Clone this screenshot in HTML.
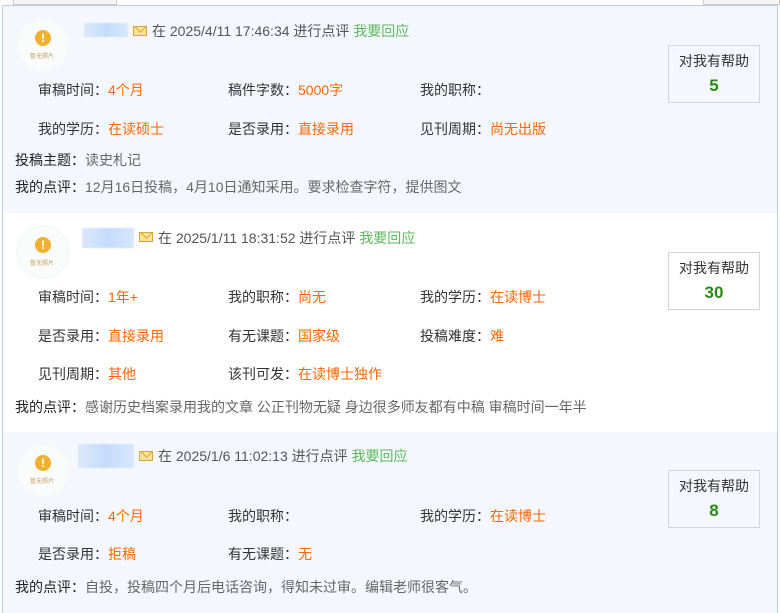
<!DOCTYPE html>
<html><head><meta charset="utf-8"><style>
*{margin:0;padding:0;box-sizing:border-box}
html,body{width:780px;height:613px;overflow:hidden}
body{background:#fff;font-family:"Liberation Sans","Noto Sans CJK SC",sans-serif;font-size:14px;color:#333;position:relative}
.a{position:absolute;white-space:nowrap;line-height:18px}
.tab{position:absolute;top:0;height:5px;background:#f5f5f5;border:1px solid #ccc;border-top:none}
.frame{position:absolute;left:2px;top:5px;width:776px;height:608px;border:1px solid #b5d0dc;border-bottom:none}
.row{position:absolute;left:3px;width:774px}
.av{position:absolute;left:16px;width:54px;height:54px;border-radius:50%;background:radial-gradient(circle,#fafcfc 60%,#e6ebee 100%)}
.av i{position:absolute;left:19px;top:12px;width:16px;height:16px;border-radius:50%;background:#f0b030;color:#fff;font-style:normal;font-size:12px;font-weight:bold;text-align:center;line-height:16px}
.av b{position:absolute;left:14px;top:33px;font-size:6px;color:#c9a060;font-weight:normal}
.blur{position:absolute;height:14px;background:linear-gradient(90deg,#dbe8fb,#c4dcfb,#d8e7fb);filter:blur(.6px)}
.mail{position:absolute;width:14px;height:10px;border:1px solid #d9a23a;background:#fbe39a;overflow:hidden}
.mail:after{content:"";position:absolute;left:2px;top:-5px;width:8px;height:8px;border-right:1px solid #d9a23a;border-bottom:1px solid #d9a23a;transform:rotate(45deg)}
.hd{color:#555}
.g{color:#5cb85c}
.o{color:#f60}
.lb{color:#222}
.c{color:#666}
.help{position:absolute;left:668px;width:92px;height:58px;border:1px solid #d5d5d5;text-align:center}
.help div{margin-top:5px;color:#333}
.help b{display:block;margin-top:5px;color:#2a8a14;font-size:17px}
</style></head><body>
<div class="tab" style="left:13px;width:104px"></div>
<div class="tab" style="left:703px;width:77px"></div>
<div class="frame"></div>
<div class="row" style="top:6px;height:207px;background:#f4f8fe"></div>
<div class="row" style="top:432px;height:181px;background:#f4f8fe"></div>

<!-- Row 1 -->
<div class="av" style="top:18px"><i>!</i><b>暂无照片</b></div>
<div class="blur" style="left:84px;top:23px;width:44px"></div>
<div class="mail" style="left:133px;top:26px"></div>
<div class="a hd" style="left:152px;top:22px">在 2025/4/11 17:46:34 进行点评 <span class="g">我要回应</span></div>
<div class="a" style="left:38px;top:81px">审稿时间：<span class="o">4个月</span></div>
<div class="a" style="left:228px;top:81px">稿件字数：<span class="o">5000字</span></div>
<div class="a" style="left:420px;top:81px">我的职称：</div>
<div class="a" style="left:38px;top:120px">我的学历：<span class="o">在读硕士</span></div>
<div class="a" style="left:228px;top:120px">是否录用：<span class="o">直接录用</span></div>
<div class="a" style="left:420px;top:120px">见刊周期：<span class="o">尚无出版</span></div>
<div class="a" style="left:15px;top:151px"><span class="lb">投稿主题：</span><span class="c">读史札记</span></div>
<div class="a" style="left:15px;top:178px"><span class="lb">我的点评：</span><span class="c">12月16日投稿，4月10日通知采用。要求检查字符，提供图文</span></div>
<div class="help" style="top:45px"><div>对我有帮助</div><b>5</b></div>

<!-- Row 2 -->
<div class="av" style="top:225px"><i>!</i><b>暂无照片</b></div>
<div class="blur" style="left:82px;top:228px;width:52px;height:20px"></div>
<div class="mail" style="left:139px;top:232px"></div>
<div class="a hd" style="left:158px;top:229px">在 2025/1/11 18:31:52 进行点评 <span class="g">我要回应</span></div>
<div class="a" style="left:38px;top:288px">审稿时间：<span class="o">1年+</span></div>
<div class="a" style="left:228px;top:288px">我的职称：<span class="o">尚无</span></div>
<div class="a" style="left:420px;top:288px">我的学历：<span class="o">在读博士</span></div>
<div class="a" style="left:38px;top:327px">是否录用：<span class="o">直接录用</span></div>
<div class="a" style="left:228px;top:327px">有无课题：<span class="o">国家级</span></div>
<div class="a" style="left:420px;top:327px">投稿难度：<span class="o">难</span></div>
<div class="a" style="left:38px;top:365px">见刊周期：<span class="o">其他</span></div>
<div class="a" style="left:228px;top:365px">该刊可发：<span class="o">在读博士独作</span></div>
<div class="a" style="left:15px;top:398px"><span class="lb">我的点评：</span><span class="c">感谢历史档案录用我的文章 公正刊物无疑 身边很多师友都有中稿 审稿时间一年半</span></div>
<div class="help" style="top:252px"><div>对我有帮助</div><b>30</b></div>

<!-- Row 3 -->
<div class="av" style="top:443px"><i>!</i><b>暂无照片</b></div>
<div class="blur" style="left:78px;top:444px;width:56px;height:24px"></div>
<div class="mail" style="left:139px;top:451px"></div>
<div class="a hd" style="left:158px;top:447px">在 2025/1/6 11:02:13 进行点评 <span class="g">我要回应</span></div>
<div class="a" style="left:38px;top:507px">审稿时间：<span class="o">4个月</span></div>
<div class="a" style="left:228px;top:507px">我的职称：</div>
<div class="a" style="left:420px;top:507px">我的学历：<span class="o">在读博士</span></div>
<div class="a" style="left:38px;top:545px">是否录用：<span class="o">拒稿</span></div>
<div class="a" style="left:228px;top:545px">有无课题：<span class="o">无</span></div>
<div class="a" style="left:15px;top:578px"><span class="lb">我的点评：</span><span class="c">自投，投稿四个月后电话咨询，得知未过审。编辑老师很客气。</span></div>
<div class="help" style="top:470px"><div>对我有帮助</div><b>8</b></div>
</body></html>
